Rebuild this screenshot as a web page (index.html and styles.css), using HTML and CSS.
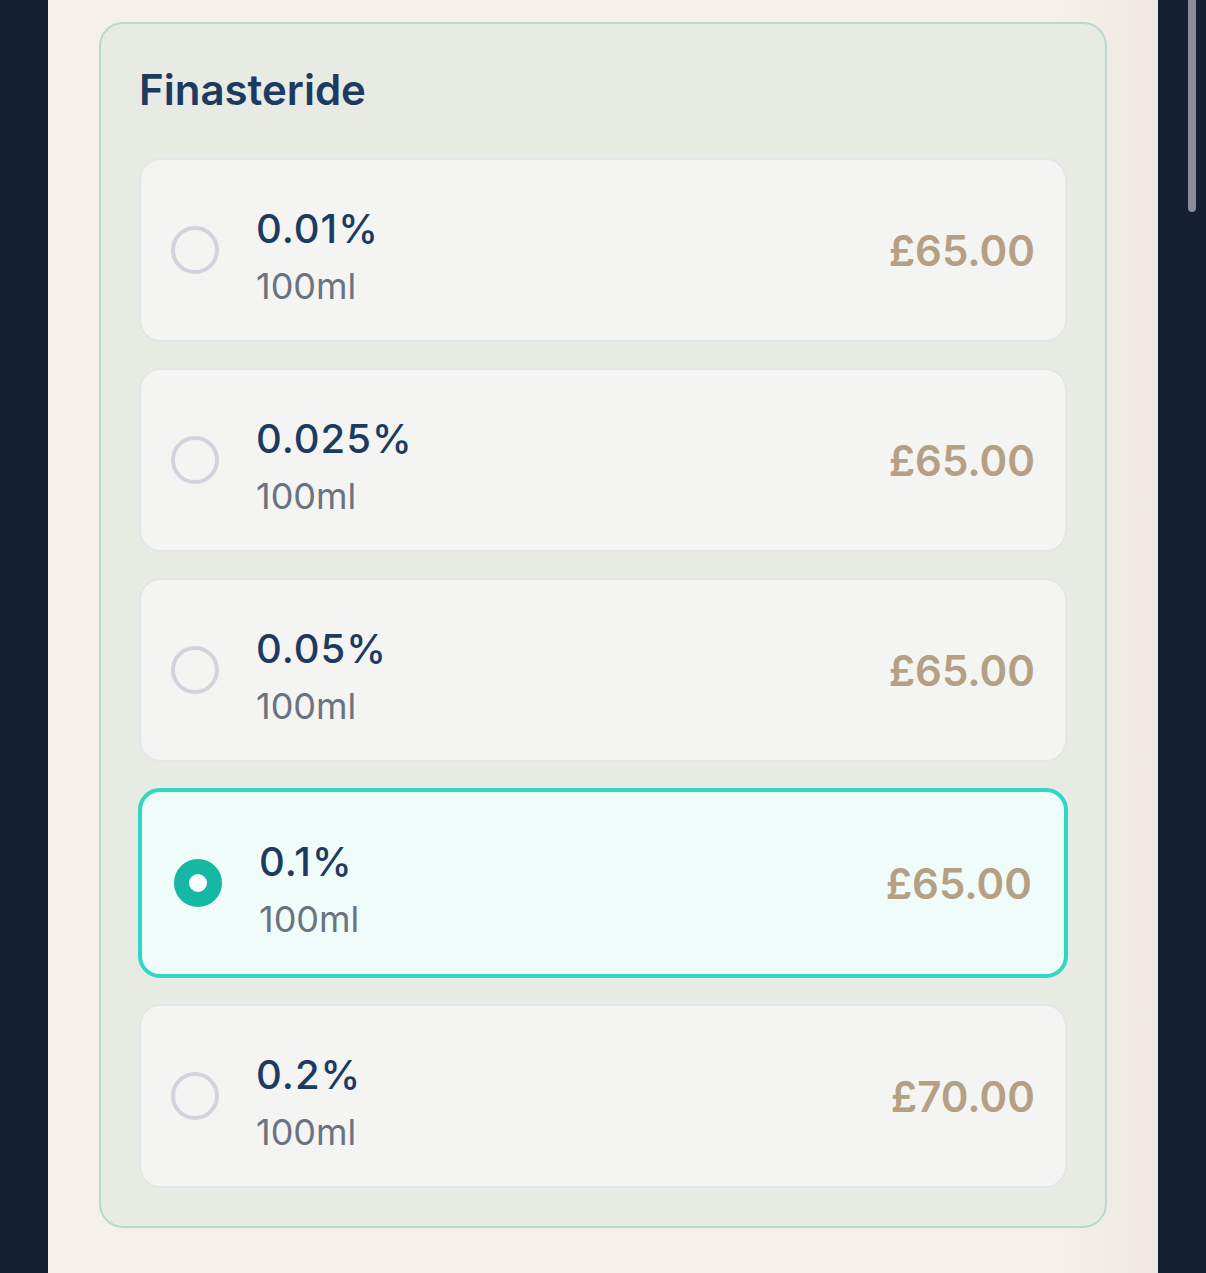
FILE: index.html
```html
<!DOCTYPE html>
<html lang="en">
<head>
    <meta charset="UTF-8">
    <meta name="viewport" content="width=device-width, initial-scale=1.0">
    <title>Finasteride</title>
    <link rel="stylesheet" href="styles.css">
</head>
<body>
    <div class="page">
        <main class="panel">
            <section class="product-card">
                <h2 class="product-title">Finasteride</h2>

                <div class="options">
                    <label class="option">
                        <span class="radio"></span>
                        <span class="option-text">
                            <span class="strength">0.01%</span>
                            <span class="volume">100ml</span>
                        </span>
                        <span class="price">£65.00</span>
                    </label>
                    <label class="option">
                        <span class="radio"></span>
                        <span class="option-text">
                            <span class="strength">0.025%</span>
                            <span class="volume">100ml</span>
                        </span>
                        <span class="price">£65.00</span>
                    </label>
                    <label class="option">
                        <span class="radio"></span>
                        <span class="option-text">
                            <span class="strength">0.05%</span>
                            <span class="volume">100ml</span>
                        </span>
                        <span class="price">£65.00</span>
                    </label>
                    <label class="option selected">
                        <span class="radio"></span>
                        <span class="option-text">
                            <span class="strength">0.1%</span>
                            <span class="volume">100ml</span>
                        </span>
                        <span class="price">£65.00</span>
                    </label>
                    <label class="option">
                        <span class="radio"></span>
                        <span class="option-text">
                            <span class="strength">0.2%</span>
                            <span class="volume">100ml</span>
                        </span>
                        <span class="price">£70.00</span>
                    </label>
                </div>
            </section>
        </main>
        <div class="scroll-track">
            <div class="scroll-thumb"></div>
        </div>
    </div>
</body>
</html>
```

FILE: styles.css
```css
* {
    box-sizing: border-box;
}
html, body {
    margin: 0;
    height: 100%;
}
body {
    background-color: #142031;
    font-family: Inter, "Noto Sans", sans-serif;
    overflow: hidden;
}
.page {
    display: flex;
    height: 100%;
    padding-left: 48px;
}
.panel {
    width: 1110px;
    height: 100%;
    padding: 22px 51px 0;
    background: linear-gradient(to right, #f5f0ea 0%, #f5f0ea 90%, #efe9e2 100%);
}
.scroll-track {
    flex: 1;
    position: relative;
}
.scroll-thumb {
    position: absolute;
    top: -10px;
    left: 30px;
    width: 8px;
    height: 222px;
    border-radius: 4px;
    background-color: #878c96;
}
.product-card {
    border: 2px solid #b9d8d1;
    border-radius: 24px;
    background-color: #e8ebe4;
    padding: 42px 38px 38px;
}
.product-title {
    margin: 0 0 44px;
    font-size: 42px;
    line-height: 48px;
    font-weight: 600;
    color: #1d3a60;
}
.options {
    display: flex;
    flex-direction: column;
    gap: 26px;
}
.option {
    display: flex;
    align-items: center;
    height: 184px;
    padding: 0 30px;
    border: 2px solid #e4e5e8;
    border-radius: 22px;
    background-color: #f4f4f2;
    cursor: pointer;
}
.option.selected {
    height: 190px;
    margin: 0 -1px;
    padding: 0 32px;
    border: 4px solid #2fd7c4;
    background-color: #effcf9;
}
.radio {
    width: 48px;
    height: 48px;
    border-radius: 50%;
    border: 4px solid #d1d4dc;
    flex-shrink: 0;
}
.selected .radio {
    border: 15px solid #14b8a5;
    background-color: #fff;
}
.option-text {
    display: flex;
    flex-direction: column;
    margin-left: 37px;
    padding-top: 10px;
    flex: 1;
}
.strength {
    font-size: 40px;
    line-height: 52px;
    font-weight: 500;
    color: #1d3a60;
    letter-spacing: 1px;
}
.volume {
    margin-top: 10px;
    font-size: 36px;
    line-height: 42px;
    color: #6b7280;
}
.price {
    font-size: 42px;
    font-weight: 600;
    color: #b5a084;
}
```
